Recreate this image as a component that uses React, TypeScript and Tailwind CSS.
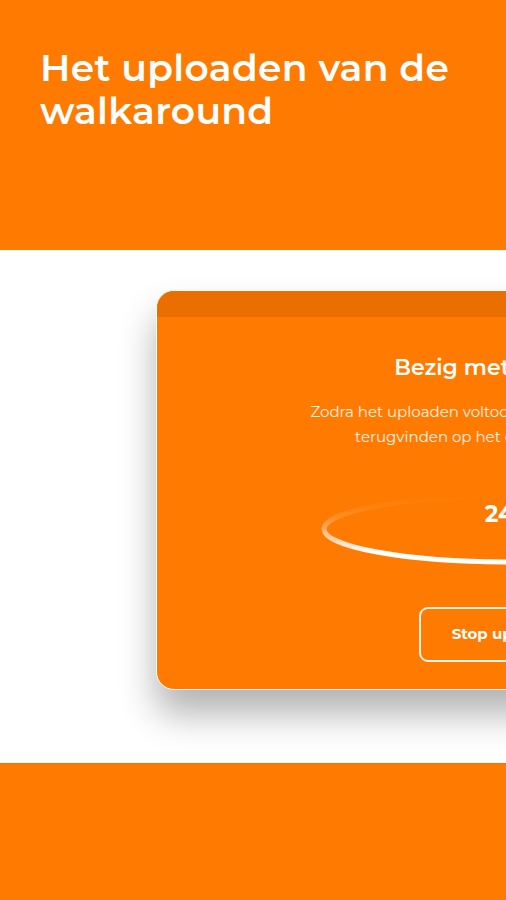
import React from "react";

export default function App() {
  return (
    <div
      className="w-[506px] h-[900px] overflow-hidden flex flex-col bg-white"
      style={{ fontFamily: "Montserrat, Inter, 'Open Sans', sans-serif" }}
    >
      <header className="h-[250px] shrink-0 bg-[#ff7a00] px-10 pt-[46px]">
        <h1 className="text-white font-semibold text-[37.6px] leading-[43px] tracking-[0.3px]">
          Het uploaden van de
          <br />
          walkaround
        </h1>
      </header>

      <section className="h-[513px] shrink-0 bg-white pt-[40px] pl-[156px] overflow-hidden">
        <div className="w-[706px] h-[400px] rounded-[18px] overflow-hidden bg-[#ff7a00] border border-white shadow-[0_24px_36px_rgba(0,0,0,0.3)] flex flex-col">
          <div className="h-[26px] shrink-0 bg-[#ea6f00]" />
          <div className="flex flex-col items-center pt-[36px]">
            <h2 className="text-white font-semibold text-[22px] leading-[30px]">
              Bezig met uploaden
            </h2>
            <p className="mt-[16px] text-white/90 text-[15px] leading-[25px] text-center w-[460px]">
              Zodra het uploaden voltooid is, kun je de walkaround
              <br />
              terugvinden op het dashboard in de app.
            </p>
            <div className="relative mt-[44px] w-[376px] h-[72px] flex items-center justify-center">
              <svg
                className="absolute inset-0"
                width="376"
                height="72"
                viewBox="0 0 376 72"
              >
                <defs>
                  <linearGradient id="ring" x1="0" y1="0.05" x2="0.12" y2="1">
                    <stop offset="0" stopColor="#ffffff" stopOpacity="0" />
                    <stop offset="0.3" stopColor="#ffffff" stopOpacity="0.15" />
                    <stop offset="0.55" stopColor="#ffffff" stopOpacity="0.55" />
                    <stop offset="0.85" stopColor="#ffffff" stopOpacity="1" />
                    <stop offset="1" stopColor="#ffffff" stopOpacity="1" />
                  </linearGradient>
                </defs>
                <ellipse
                  cx="188"
                  cy="36"
                  rx="185"
                  ry="33"
                  fill="none"
                  stroke="url(#ring)"
                  strokeWidth="5"
                />
              </svg>
              <span className="relative -mt-[30px] text-white font-bold text-[23px]">
                24%
              </span>
            </div>
            <button className="mt-[42px] w-[180px] h-[55px] rounded-[9px] border-2 border-white/90 text-white font-bold text-[15px]">
              Stop uploaden
            </button>
          </div>
        </div>
      </section>

      <footer className="flex-1 bg-[#ff7a00] border-t border-[#f57300]" />
    </div>
  );
}
